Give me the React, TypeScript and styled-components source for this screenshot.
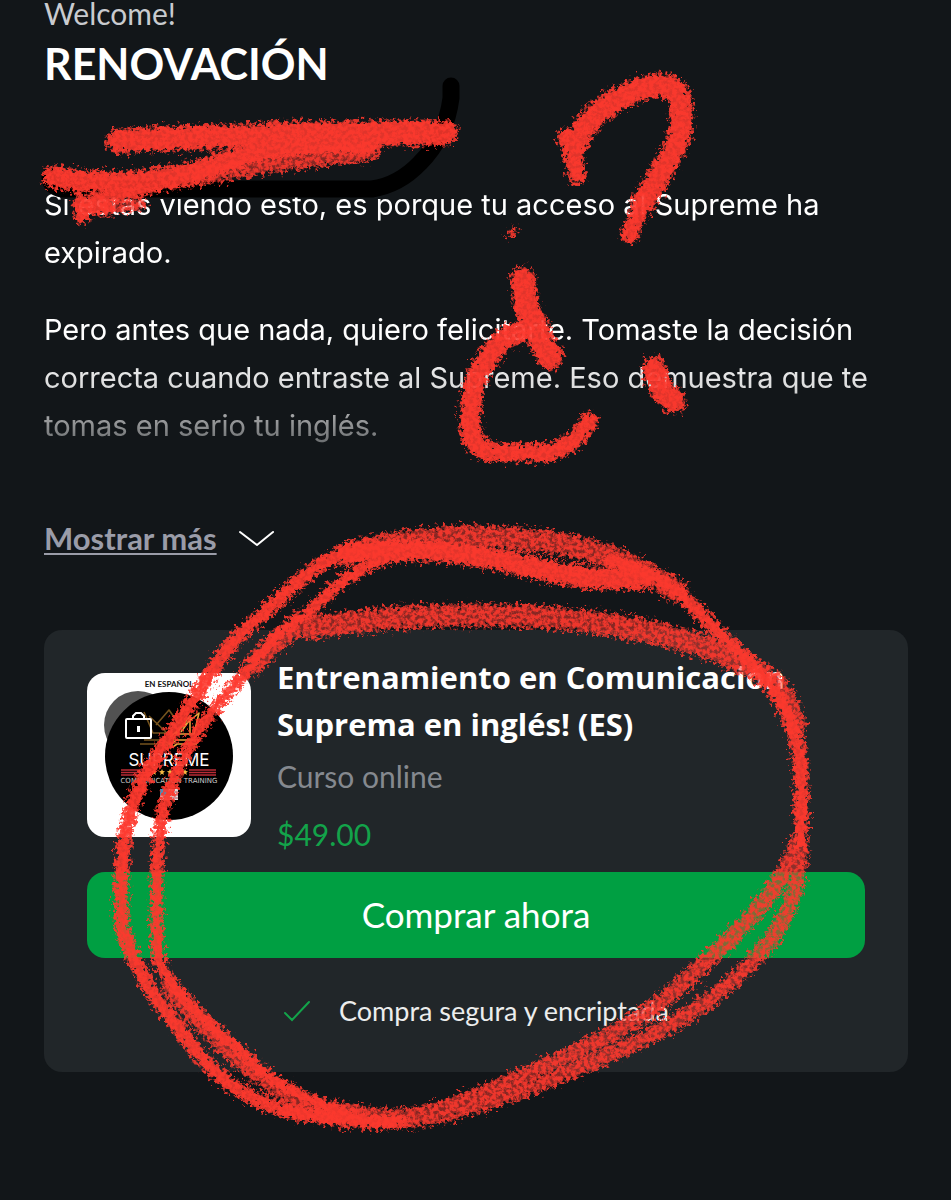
import React from "react";
import styled, { createGlobalStyle } from "styled-components";

const GlobalStyle = createGlobalStyle`
  *, *::before, *::after { box-sizing: border-box; }
  html { background: #121619; }
  body { margin: 0; background: #121619; }
`;

const display = `Lato, "Open Sans", sans-serif`;

const Page = styled.main`
  position: relative;
  min-height: 100vh;
  padding: 0 43px 128px 44px;
  overflow: hidden;
  color: #fff;
  font-family: ${display};
`;

const Greeting = styled.p`
  margin: 0;
  font-size: 30px;
  font-weight: 400;
  line-height: 26px;
  color: #c9cbcf;
`;

const Title = styled.h1`
  margin: 10px 0 89px;
  font-size: 43px;
  font-weight: 700;
  line-height: 56px;
`;

const Description = styled.section`
  font-family: Inter, sans-serif;
  font-size: 29px;
  line-height: 48px;
  mask-image: linear-gradient(#000 58%, rgba(0, 0, 0, 0.86) 76%, rgba(0, 0, 0, 0.32) 100%);
`;

const Paragraph = styled.p`
  margin: 0 0 29px;
  &:last-child { margin: 0; }
`;

const More = styled.button`
  display: flex;
  align-items: center;
  gap: 22px;
  margin: 64px 0 68px;
  padding: 0;
  border: 0;
  background: none;
  color: #fff;
  font-family: ${display};
  font-size: 31px;
  font-weight: 700;
  line-height: 48px;
  cursor: pointer;
`;

const MoreLabel = styled.span`
  color: #9a9ca8;
  text-decoration: underline;
  text-decoration-thickness: 2px;
  text-underline-offset: 3px;
`;

const Card = styled.article`
  padding: 24px 43px 37px;
  border-radius: 18px;
  background: #212629;
`;

const Product = styled.div`
  display: flex;
  gap: 26px;
`;

const Thumb = styled.svg`
  flex: none;
  width: 164px;
  height: 164px;
  margin-top: 19px;
  border-radius: 18px;
  background: #fff;
`;

const Info = styled.div`
  flex: 1;
  min-width: 0;
`;

const ProductName = styled.h2`
  max-width: 560px;
  margin: 0;
  font-family: "Open Sans", sans-serif;
  font-size: 31px;
  font-weight: 700;
  line-height: 47px;
`;

const Kind = styled.p`
  margin: 4px 0 0;
  font-size: 30px;
  line-height: 48px;
  color: #85898f;
`;

const Price = styled.p`
  margin: 10px 0 14px;
  font-size: 30px;
  line-height: 48px;
  color: #13a34a;
`;

const Buy = styled.button`
  display: block;
  width: 100%;
  height: 86px;
  padding: 0 0 2px;
  border: 0;
  border-radius: 18px;
  background: #009f42;
  color: #fff;
  font-family: ${display};
  font-size: 35px;
  cursor: pointer;
`;

const Secure = styled.p`
  display: flex;
  align-items: center;
  justify-content: center;
  gap: 28px;
  margin: 29px 0 0;
  font-size: 27px;
  line-height: 48px;
  color: #eceded;
`;

const InkLayer = styled.svg`
  position: absolute;
  top: 0;
  left: 0;
  width: 100%;
  pointer-events: none;
`;

type Stroke = { d: string; w: number; soft?: boolean };

const strokes: Stroke[] = [
  // underline scribble
  { d: "M119 141 C170 137 260 135 446 133", w: 26 },
  { d: "M270 134 L432 132", w: 26 },
  { d: "M54 177 C110 188 170 182 220 164 S290 142 370 144", w: 24 },
  { d: "M370 151 C290 160 250 166 200 176", w: 20, soft: true },
  { d: "M200 177 Q120 192 84 204", w: 16 },
  { d: "M82 200 L82 216 M86 208 L108 208", w: 17 },
  { d: "M108 210 L142 204", w: 12, soft: true },
  // question mark
  { d: "M566 138 L572 150 L577 176", w: 20 },
  { d: "M574 148 C584 122 600 108 620 98 S672 74 680 100 C686 138 673 152 658 177 L643 203", w: 25 },
  { d: "M646 195 L633 225 L630 235", w: 19 },
  { d: "M510 235 L515 231", w: 7 },
  // inverted question mark
  { d: "M523 280 L526 306 L538 334 L550 357", w: 27 },
  { d: "M540 329 C512 329 498 340 483 365 C471 387 471 400 470 428 Q470 444 487 450", w: 23 },
  { d: "M473 432 Q473 450 490 452 L542 453 C566 450 579 438 589 421", w: 20 },
  { d: "M654 368 L660 388 L674 401", w: 25 },
  // top of the loop
  { d: "M346 555 C390 540 465 532 530 540 C594 546 638 565 678 592", w: 24, soft: true },
  { d: "M346 553 C440 543 500 560 550 571 S610 577 642 579", w: 24 },
  { d: "M610 560 C654 570 684 592 718 633 C740 652 779 685 792 724 C803 757 801 780 801 815 V844", w: 16 },
  { d: "M310 628 C390 615 465 614 520 616 S650 627 710 649 S782 685 795 725", w: 24, soft: true },
  // left side
  { d: "M346 553 C305 566 285 597 255 621 S206 681 188 708 C165 748 136 777 126 830 C119 865 121 920 123 932 C136 964 145 987 168 1013 C195 1050 219 1091 284 1110 Q350 1123 400 1121", w: 16 },
  { d: "M406 553 C355 564 324 596 307 614 C273 632 260 657 232 688 S181 754 164 806 C153 855 157 920 158 958 C170 994 218 1032 257 1067 Q296 1100 358 1117", w: 14 },
  { d: "M312 619 C291 625 270 648 253 666", w: 21, soft: true },
  { d: "M170 985 C200 1025 245 1070 300 1102 Q350 1118 410 1119", w: 20, soft: true },
  // bottom right
  { d: "M799 840 C785 880 760 908 724 945 C684 983 652 1014 604 1038 S498 1089 444 1108 Q410 1120 348 1120", w: 18, soft: true },
  { d: "M801 845 C800 885 787 928 752 962 C714 1002 672 1027 616 1052 S488 1106 430 1117 Q366 1128 286 1110", w: 17, soft: true },
];

function Ink() {
  return (
    <InkLayer viewBox="0 0 951 1200" aria-hidden="true">
      <defs>
        <filter id="chalk" filterUnits="userSpaceOnUse" x="0" y="0" width="951" height="1200" colorInterpolationFilters="sRGB">
          <feTurbulence type="fractalNoise" baseFrequency="0.24" numOctaves="2" seed="4" result="noise" />
          <feDisplacementMap in="SourceGraphic" in2="noise" scale="14" xChannelSelector="R" yChannelSelector="G" result="rough" />
          <feGaussianBlur in="rough" stdDeviation="0.7" />
        </filter>
        <filter id="grain" filterUnits="userSpaceOnUse" x="0" y="0" width="951" height="1200" colorInterpolationFilters="sRGB">
          <feTurbulence type="fractalNoise" baseFrequency="0.26" numOctaves="3" seed="9" result="noise" />
          <feDisplacementMap in="SourceGraphic" in2="noise" scale="17" xChannelSelector="R" yChannelSelector="G" result="rough" />
          <feColorMatrix in="noise" type="matrix" values="0 0 0 0 1  0 0 0 0 1  0 0 0 0 1  0 0 4 0 -1.3" result="holes" />
          <feComposite in="rough" in2="holes" operator="in" result="dust" />
          <feGaussianBlur in="dust" stdDeviation="0.7" />
        </filter>
      </defs>
      <path d="M451 86 V98 Q446 137 420 163 Q399 185 372 189 H62 Q50 187 50 177" fill="none" stroke="#000" strokeWidth="17" strokeLinecap="round" strokeLinejoin="round" />
      <g fill="none" stroke="#fd392e" strokeLinecap="round" strokeLinejoin="round">
        <g filter="url(#grain)" opacity="0.88">
          {strokes.map((s) => (
            <path key={s.d} d={s.d} strokeWidth={s.w} />
          ))}
        </g>
        <g filter="url(#chalk)" opacity="0.88">
          {strokes.filter((s) => !s.soft).map((s) => (
            <path key={s.d} d={s.d} strokeWidth={s.w - 5} />
          ))}
        </g>
        <g filter="url(#chalk)" opacity="0.5">
          {strokes.filter((s) => s.soft).map((s) => (
            <path key={s.d} d={s.d} strokeWidth={s.w - 5} />
          ))}
        </g>
      </g>
    </InkLayer>
  );
}

function CourseLogo() {
  return (
    <Thumb viewBox="0 0 164 164" role="img" aria-label="Supreme Communication Training">
      <text x="82" y="14" textAnchor="middle" fontFamily="Lato, sans-serif" fontSize="8" fontWeight="700" fill="#111">EN ESPAÑOL</text>
      <circle cx="82" cy="83" r="64" fill="#000" />
      <circle cx="51" cy="52" r="34" fill="#000" fillOpacity="0.68" />
      <g fill="none" stroke="#e9a53c" strokeWidth="1.6" strokeLinejoin="round">
        <path d="M83 64 L112 40 L107 61 H89 L103 43 V60 M94 59 L104 45 M84 72 L89 67 H106 M82 70 L86 74 L90 71 H110" />
        <path d="M57 39 L66 60 H80 L62 43 M69 52 L82 37 L92 51 M53 71 H78 L84 74 M57 67 H76 L84 72" opacity="0.5" />
      </g>
      <text x="82" y="93" textAnchor="middle" fontFamily="Inter, sans-serif" fontSize="17" fill="#fff">SUPREME</text>
      <path d="M34 97 H64 M34 99.5 H64 M34 102 H64 M102 97 H129 M102 99.5 H129 M102 102 H129" stroke="#b92b36" strokeWidth="1.3" />
      {[67, 75, 83, 91, 98].map((x) => (
        <path key={x} transform={`translate(${x} 99)`} d="M0 -3 L.9 -1 L3 -.8 L1.3 .7 L1.9 3 L0 1.8 L-1.9 3 L-1.3 .7 L-3 -.8 L-.9 -1Z" fill="#f5b942" />
      ))}
      <text x="82" y="110" textAnchor="middle" fontFamily="DejaVu Sans, sans-serif" fontSize="7" fill="#ccc">COMMUNICATION TRAINING</text>
      <g>
        <rect x="73" y="116" width="18" height="11" fill="#ddd" />
        <path d="M73 119 H91 M73 122 H91 M73 125 H91" stroke="#b94a52" />
        <rect x="73" y="116" width="8" height="6" fill="#4b8bb5" />
      </g>
      <g fill="none" stroke="#fff" strokeWidth="2">
        <rect x="39" y="46" width="25" height="19" rx="1" />
        <path d="M46 46 V43 L49 40 H54 L57 43 V46" />
        <path d="M51.5 53 V59" strokeWidth="3" />
      </g>
    </Thumb>
  );
}

export default function App() {
  return (
    <>
      <GlobalStyle />
      <Page>
        <Greeting>Welcome!</Greeting>
        <Title>RENOVACIÓN</Title>
        <Description>
          <Paragraph>Si estás viendo esto, es porque tu acceso al Supreme ha expirado.</Paragraph>
          <Paragraph>
            Pero antes que nada, quiero felicitarte. Tomaste la decisión correcta cuando entraste al
            Supreme. Eso demuestra que te tomas en serio tu inglés.
          </Paragraph>
        </Description>
        <More type="button">
          <MoreLabel>Mostrar más</MoreLabel>
          <svg width="36" height="18" viewBox="0 0 36 18" fill="none" stroke="#fff" strokeWidth="2" strokeLinecap="round" strokeLinejoin="round" aria-hidden="true">
            <path d="M1 3 L18 16 L34 3" />
          </svg>
        </More>
        <Card>
          <Product>
            <CourseLogo />
            <Info>
              <ProductName>Entrenamiento en Comunicación Suprema en inglés! (ES)</ProductName>
              <Kind>Curso online</Kind>
              <Price>$49.00</Price>
            </Info>
          </Product>
          <Buy type="button">Comprar ahora</Buy>
          <Secure>
            <svg width="28" height="22" viewBox="0 0 28 22" fill="none" stroke="#13a34a" strokeWidth="2" strokeLinecap="round" aria-hidden="true">
              <path d="M2 13 L9 20 L26 2" />
            </svg>
            Compra segura y encriptada
          </Secure>
        </Card>
        <Ink />
      </Page>
    </>
  );
}
